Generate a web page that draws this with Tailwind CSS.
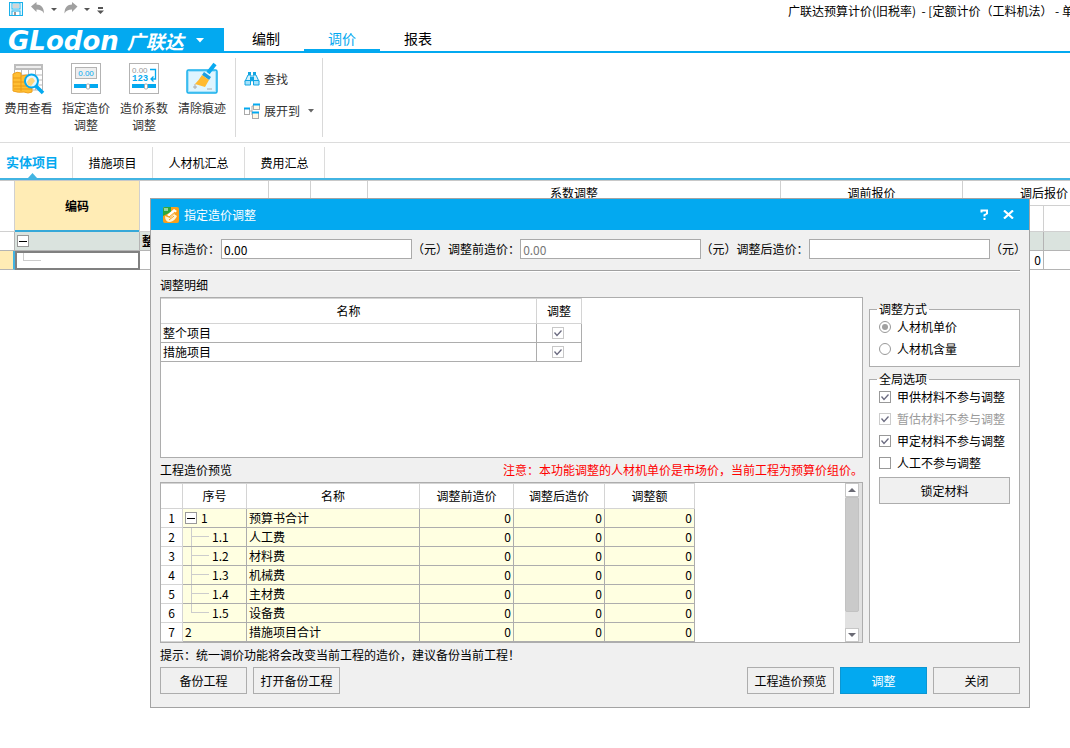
<!DOCTYPE html>
<html lang="zh-CN">
<head>
<meta charset="utf-8">
<title>广联达预算计价</title>
<script src="https://cdn.jsdelivr.net/npm/@tailwindcss/browser@4"></script>
</head>
<body class="relative min-h-screen overflow-hidden bg-white font-['Noto_Sans_CJK_SC','Liberation_Sans',sans-serif] text-xs text-black">

<!-- Quick access bar -->
<header class="flex h-7 items-start overflow-hidden">
  <div class="flex w-[788px] shrink-0 items-start pt-0.5 pl-2">
    <button aria-label="保存" class="mr-2"><svg width="15" height="15" viewBox="0 0 15 15"><rect x="1.500" y="0.500" width="13" height="13" fill="#e2f6fd" stroke="#1ab0ea"/><rect x="4" y="1" width="8" height="6" fill="#fff" stroke="#29b5ec"/><path d="M5 3h6M5 5h6" stroke="#aaa"/><rect x="4" y="9" width="8" height="4.500" fill="#fff" stroke="#1ab0ea"/><rect x="6" y="10" width="2" height="3" fill="#999"/></svg></button>
    <button aria-label="撤销" class="mr-1.5"><svg width="14" height="12" viewBox="0 0 14 12"><path d="M0 4.500 5.500 0v2.500C10 2.500 13 5.500 13 11.500 11.500 8.500 9 7.500 5.500 7.500V10z" fill="#a0a0a0"/></svg></button>
    <button aria-label="撤销列表" class="mt-1.5 mr-[7px]"><svg width="6" height="3"><path d="M0 0h6L3 3z" fill="#555"/></svg></button>
    <button aria-label="恢复" class="mr-1.5"><svg width="14" height="12" viewBox="0 0 14 12"><path d="M13.500 4.500 8 0v2.500C3.500 2.500 .5 5.500 .5 11.500 2 8.500 4.500 7.500 8 7.500V10z" fill="#a0a0a0"/></svg></button>
    <button aria-label="恢复列表" class="mt-1.5 mr-[7px]"><svg width="6" height="3"><path d="M0 0h6L3 3z" fill="#555"/></svg></button>
    <button aria-label="更多" class="mt-1"><svg width="7" height="8"><path d="M1 2h5" stroke="#555" stroke-width="2"/><path d="M0 4.500h7L3.500 8z" fill="#555"/></svg></button>
  </div>
  <h1 class="pt-[3px] leading-4 whitespace-pre">广联达预算计价(旧税率)  - [定额计价（工料机法） - 单</h1>
</header>

<!-- Main menu -->
<nav class="flex h-[25px] items-end border-b-2 border-[#03a9f0] text-sm">
  <button class="flex h-[25px] w-56 items-center bg-[#03a9f0] pl-2 text-white -mb-0.5">
    <span class="font-['DejaVu_Sans'] text-[26px] leading-6 font-bold italic">GLodon</span>
    <span class="ml-2 text-[19px] leading-6 font-bold italic">广联达</span>
    <svg class="ml-3" width="8" height="5"><path d="M0 0h8L4 4.500z" fill="#fff"/></svg>
  </button>
  <a href="#" class="ml-1 h-[23px] w-[76px] text-center leading-5">编制</a>
  <a href="#" class="h-[23px] w-[76px] border-b-2 border-[#03a9f0] text-center leading-5 text-[#03a9f0]">调价</a>
  <a href="#" class="h-[23px] w-[76px] text-center leading-5">报表</a>
</nav>

<!-- Ribbon -->
<section class="flex h-[90px] border-b border-[#dcdcdc] text-[#333]">
  <div class="flex pt-2">
    <button class="flex w-[57px] flex-col items-center justify-start leading-[17px]">
      <svg class="mb-1" width="34" height="34" viewBox="2 0 34 34"><rect x="4.500" y="4" width="28" height="25" fill="#fff" stroke="#b3b3b3"/><rect x="4" y="3" width="29" height="6" fill="#bdbdbd"/><rect x="6" y="5" width="25" height="2" fill="#eee"/><path d="M5 14h27M5 19h27M5 24h27M11.500 9v20M18.500 9v20M25.500 9v20" stroke="#b9b9b9"/><path d="M3 13q4-3 8-1v3q5-2 11 0v16q-4 2-8 0-6 1-11-1z" fill="#ffbe32" stroke="#efa11d"/><path d="M3 17h8M3 21h19M3 25h19M4 28h18M11 15v15" stroke="#e99a17"/><path d="m26 25 7 7" stroke="#03a9f0" stroke-width="3.500"/><circle cx="21.500" cy="20" r="6.500" fill="#e5f7ff" stroke="#03a9f0" stroke-width="2"/><path d="M17 21q3-5 6-4l2 3-4 5-3-1z" fill="#ffd57b"/></svg>
      费用查看</button>
    <button class="flex w-[58px] flex-col items-center justify-start leading-[17px]">
      <svg class="mb-1" width="34" height="34" viewBox="0 0 34 34"><rect x="2.500" y="2.500" width="29" height="30" fill="#fff" stroke="#b3b3b3"/><rect x="6.500" y="6.500" width="21" height="11" fill="#eee" stroke="#b3b3b3"/><text x="17" y="15" text-anchor="middle" font-family="Liberation Sans" font-size="8" fill="#03a9f0">0.00</text><path d="M5 25h24" stroke="#03a9f0" stroke-width="4"/><rect x="17.500" y="23" width="3" height="5" rx="1" fill="#fff" stroke="#aaa"/></svg>
      指定造价<br>调整</button>
    <button class="flex w-[58px] flex-col items-center justify-start leading-[17px]">
      <svg class="mb-1" width="34" height="34" viewBox="0 0 34 34"><rect x="2.500" y="2.500" width="29" height="30" fill="#fff" stroke="#b3b3b3"/><text x="5" y="12" font-family="Liberation Sans" font-size="8" fill="#999">0.00</text><text x="5" y="20" font-family="Liberation Mono" font-size="9" font-weight="bold" fill="#03a9f0">123</text><path d="M23 8.500h5.500V18H24M26.500 15.500 24 18l2.500 2.500" fill="none" stroke="#03a9f0" stroke-width="1.300"/><path d="M5 25h24" stroke="#03a9f0" stroke-width="4"/><rect x="17.500" y="23" width="3" height="5" rx="1" fill="#fff" stroke="#aaa"/></svg>
      造价系数<br>调整</button>
    <button class="flex w-[58px] flex-col items-center justify-start leading-[17px]">
      <svg class="mb-1" width="34" height="34" viewBox="0 0 34 34"><rect x="2" y="9" width="30" height="23" rx="1.500" fill="#a5e2fb" stroke="#19b0ec" stroke-width="1.500"/><rect x="4" y="11" width="26" height="19" fill="#dff5ff"/><path d="M8 26h4M10 23v5M22 28h5" stroke="#aaa"/><path d="m30 3-7 9" stroke="#0aaaf0" stroke-width="4"/><path d="m19 11 7 5-2 3-7-5z" fill="#1c9fe0"/><path d="m17 14 7 5-4 7-10-3q4-4 7-9z" fill="#ffba30"/></svg>
      清除痕迹</button>
  </div>
  <div class="mt-[5px] ml-1 flex h-[79px] w-[88px] flex-col gap-2.5 border-x border-[#d9d9d9] pt-2.5 pl-2">
    <button class="flex h-[22px] items-center gap-1"><svg width="16" height="16" viewBox="0 0 16 16"><path d="M4 4h3v6.500H1zM9 4h3l3 6.500H9z" fill="#d3f1fd" stroke="#12a5e2"/><path d="M1 9.500h5.500v4.500H1zM9.500 9.500H15v4.500H9.500z" fill="#a5e2fb" stroke="#12a5e2"/><path d="M4 1h3v3H4zM9 1h3v3H9zM6 6h4v4H6z" fill="#12a5e2"/></svg>查找</button>
    <button class="flex h-[22px] items-center gap-1"><svg width="16" height="16" viewBox="0 0 16 16"><path d="M5 8h3M8 3v9M8 3h2M8 12h2" stroke="#aaa"/><rect x=".5" y="5.500" width="5" height="6" fill="#fff" stroke="#aaa"/><path d="M0 5.500h6" stroke="#03a9f0" stroke-width="2"/><rect x="9.500" y="1.500" width="6" height="5" fill="#fff8e5" stroke="#aaa"/><path d="M9 1.500h7" stroke="#03a9f0" stroke-width="2"/><rect x="8.500" y="9.500" width="6" height="6" fill="#fff8e5" stroke="#aaa"/><path d="M8 9.500h7" stroke="#03a9f0" stroke-width="2"/></svg>展开到<svg class="ml-1" width="6" height="4"><path d="M0 0h6L3 3.500z" fill="#666"/></svg></button>
  </div>
</section>

<!-- Section tabs -->
<nav class="flex h-[37px] border-b-2 border-[#42b4e2] pt-1 leading-8">
  <a href="#" class="relative w-[73px] border-r border-[#dcdcdc] pl-1.5 text-[13px] leading-[30px] font-bold text-[#03a9f0]">实体项目<svg class="absolute bottom-0 left-7" width="9" height="5"><path d="M0 5 4.500 0 9 5z" fill="#42b4e2"/></svg></a>
  <a href="#" class="w-20 border-r border-[#dcdcdc] text-center">措施项目</a>
  <a href="#" class="w-[92px] border-r border-[#dcdcdc] text-center">人材机汇总</a>
  <a href="#" class="w-20 border-r border-[#dcdcdc] text-center">费用汇总</a>
</nav>

<!-- Item grid -->
<main class="overflow-hidden border-t border-[#c8c8c8]">
  <table class="w-[1126px] table-fixed border-separate border-spacing-0 leading-4 [&_th]:border-r [&_th]:border-b [&_th]:border-[#d0d0d0] [&_th]:p-0 [&_th]:font-normal [&_td]:border-r [&_td]:border-b [&_td]:border-[#b4b4b4] [&_td]:p-0">
    <colgroup><col class="w-[15px]"><col class="w-[125px]"><col class="w-[129px]"><col class="w-[42px]"><col class="w-[57px]"><col class="w-[413px]"><col class="w-[182px]"><col class="w-[81px]"><col class="w-[82px]"></colgroup>
    <thead>
      <tr class="h-[25px]"><th rowspan="2"></th><th rowspan="2" class="border-b-0! bg-[#ffecb5] font-bold!"><div class="flex h-[51px] items-center justify-center border-b-2 border-[#36a8d8]">编码</div></th><th rowspan="2"></th><th rowspan="2"></th><th rowspan="2"></th><th>系数调整</th><th>调前报价</th><th colspan="2">调后报价</th></tr>
      <tr class="h-[26px]"><th></th><th></th><th></th><th></th></tr>
    </thead>
    <tbody>
      <tr class="h-[19px] bg-[#dae3de]"><td class="bg-white"></td><td><button aria-label="折叠" class="ml-0.5 flex size-3 items-center justify-center border border-[#999] bg-white"><span class="h-px w-2 bg-black"></span></button></td><td class="pl-0.5! font-bold">整</td><td></td><td></td><td></td><td></td><td></td><td></td></tr>
      <tr class="h-[19px]"><td class="border-r-2! border-r-[#42b4e2]! bg-[#ffecb5]"></td><td class="border-0!"><div class="h-[19px] border-2 border-[#808080] pl-1.5"><div class="h-2 w-[18px] border-b border-l border-[#ccc]"></div></div></td><td></td><td></td><td></td><td></td><td></td><td class="pr-0.5! text-right">0</td><td></td></tr>
    </tbody>
  </table>
</main>

<!-- Dialog window -->
<div role="dialog" aria-labelledby="dlg" class="absolute top-[198px] right-10 left-[150px] border border-[#a3a3a3] bg-[#f0f0f0]">
  <div class="flex h-[31px] items-center bg-[#03a9f0] pl-3 text-white">
    <svg width="16" height="16" viewBox="0 0 16 16"><rect width="16" height="16" rx="2" fill="#f8a01c"/><path d="M0 2a2 2 0 0 1 2-2h6v5L0 9z" fill="#2fa83b"/><path d="M2 1v3M4 1v3" stroke="#fff"/><path d="M4 8 11 2l3 2-7 6z" fill="#fff"/><path d="M2 9q0 6 5 6 5-1 7-6l-3-2-4 4z" fill="#fff3d4"/><path d="m6 10 6-5M6 13l5-4" stroke="#f8a01c"/></svg>
    <h2 id="dlg" class="ml-[5px] flex-1">指定造价调整</h2>
    <button aria-label="帮助" class="mr-3.5"><svg width="9" height="11" viewBox="0 0 9 11"><path d="M1.500 3.500V1.500h5.500v3L4.500 6v1.500" fill="none" stroke="#fff" stroke-width="2"/><rect x="3.500" y="9" width="2" height="2" fill="#fff"/></svg></button>
    <button aria-label="关闭窗口" class="mr-[15px]"><svg width="11" height="9" viewBox="0 0 11 9"><path d="m1 .5 9 8M10 .5l-9 8" stroke="#fff" stroke-width="2.200"/></svg></button>
  </div>

  <div class="px-[9px] pt-[9px] pb-[13px]">
    <div class="-mr-1.5 flex h-5 items-center whitespace-nowrap">
      <label for="target">目标造价：</label><input id="target" value="0.00" class="ml-px h-5 min-w-0 flex-[191] border border-[#aaa] bg-white px-0.5">
      <span>（元）</span><label for="before">调整前造价：</label><input id="before" value="0.00" disabled class="h-5 min-w-0 flex-[180] border border-[#aaa] bg-white px-0.5 text-[#777]">
      <span>（元）</span><label for="after">调整后造价：</label><input id="after" class="h-5 min-w-0 flex-[181] border border-[#aaa] bg-white px-0.5">
      <span>（元）</span>
    </div>
    <hr class="mt-[11px] h-0.5 border-t border-b border-t-[#a0a0a0] border-b-white">

    <div class="flex gap-1.5">
      <div class="min-w-0 flex-1">
        <h3 class="h-[25px] leading-[25px]">调整明细</h3>
        <div class="h-[161px] border border-[#adadad] bg-white">
          <table class="w-[421px] table-fixed border-separate border-spacing-0 leading-4 [&_th]:border-t [&_th]:border-r [&_th]:border-b [&_th]:border-[#d4d4d4] [&_th]:p-0 [&_th]:font-normal [&_td]:border-r [&_td]:border-b [&_td]:border-[#adadad] [&_td]:p-0">
            <colgroup><col class="w-[376px]"><col class="w-[45px]"></colgroup>
            <thead><tr class="h-[26px]"><th>名称</th><th>调整</th></tr></thead>
            <tbody>
              <tr class="h-[19px]"><td class="pl-0.5!"><label for="d1">整个项目</label></td><td><span class="ml-[15px] grid size-3"><input id="d1" type="checkbox" checked disabled class="peer col-start-1 row-start-1 size-3 appearance-none border border-[#c8c8c8]"><svg class="pointer-events-none invisible col-start-1 row-start-1 peer-checked:visible" width="12" height="12"><path d="m2.500 5.500 2.500 3 4.500-5" fill="none" stroke="#6b6b80" stroke-width="1.300"/></svg></span></td></tr>
              <tr class="h-[19px]"><td class="pl-0.5!"><label for="d2">措施项目</label></td><td><span class="ml-[15px] grid size-3"><input id="d2" type="checkbox" checked disabled class="peer col-start-1 row-start-1 size-3 appearance-none border border-[#c8c8c8]"><svg class="pointer-events-none invisible col-start-1 row-start-1 peer-checked:visible" width="12" height="12"><path d="m2.500 5.500 2.500 3 4.500-5" fill="none" stroke="#6b6b80" stroke-width="1.300"/></svg></span></td></tr>
            </tbody>
          </table>
        </div>

        <div class="flex h-6 items-center justify-between"><h3>工程造价预览</h3><p class="text-[#f00]">注意：本功能调整的人材机单价是市场价，当前工程为预算价组价。</p></div>

        <div class="flex h-[161px] justify-between border border-[#adadad] bg-white">
          <table class="w-[534px] table-fixed border-separate border-spacing-0 leading-4 [&_th]:border-r [&_th]:border-b [&_th]:border-[#d4d4d4] [&_th]:p-0 [&_th]:font-normal [&_thead_th]:border-t [&_td]:border-r [&_td]:border-b [&_td]:border-[#adadad] [&_td]:bg-[#ffffe1] [&_td]:p-0 [&_tbody_tr]:h-[19px] [&_td:nth-child(3)]:pl-0.5 [&_td:nth-child(n+4)]:pr-0.5 [&_td:nth-child(n+4)]:text-right">
            <colgroup><col class="w-[22px]"><col class="w-[64px]"><col class="w-[173px]"><col class="w-[94px]"><col class="w-[91px]"><col class="w-[90px]"></colgroup>
            <thead><tr class="h-[26px]"><th></th><th>序号</th><th>名称</th><th>调整前造价</th><th>调整后造价</th><th>调整额</th></tr></thead>
            <tbody>
              <tr><th>1</th><td><div class="flex h-[18px] items-center pl-0.5"><button aria-label="折叠" class="mr-1 flex size-3 items-center justify-center border border-[#999] bg-white"><span class="h-px w-2 bg-black"></span></button>1</div></td><td>预算书合计</td><td>0</td><td>0</td><td>0</td></tr>
              <tr><th>2</th><td><div class="flex h-[18px] items-center pl-2"><span class="mr-[3px] h-[18px] w-[18px] border-l border-[#ccc]"><span class="block h-[9px] border-b border-[#ccc]"></span></span>1.1</div></td><td>人工费</td><td>0</td><td>0</td><td>0</td></tr>
              <tr><th>3</th><td><div class="flex h-[18px] items-center pl-2"><span class="mr-[3px] h-[18px] w-[18px] border-l border-[#ccc]"><span class="block h-[9px] border-b border-[#ccc]"></span></span>1.2</div></td><td>材料费</td><td>0</td><td>0</td><td>0</td></tr>
              <tr><th>4</th><td><div class="flex h-[18px] items-center pl-2"><span class="mr-[3px] h-[18px] w-[18px] border-l border-[#ccc]"><span class="block h-[9px] border-b border-[#ccc]"></span></span>1.3</div></td><td>机械费</td><td>0</td><td>0</td><td>0</td></tr>
              <tr><th>5</th><td><div class="flex h-[18px] items-center pl-2"><span class="mr-[3px] h-[18px] w-[18px] border-l border-[#ccc]"><span class="block h-[9px] border-b border-[#ccc]"></span></span>1.4</div></td><td>主材费</td><td>0</td><td>0</td><td>0</td></tr>
              <tr><th>6</th><td><div class="flex h-[18px] items-center pl-2"><span class="mr-[3px] h-[18px] w-[18px]"><span class="block h-[9px] border-b border-l border-[#ccc]"></span></span>1.5</div></td><td>设备费</td><td>0</td><td>0</td><td>0</td></tr>
              <tr><th>7</th><td class="pl-0.5!">2</td><td>措施项目合计</td><td>0</td><td>0</td><td>0</td></tr>
            </tbody>
          </table>
          <div class="flex w-[17px] flex-col items-start bg-[#e1e1e1]">
            <button aria-label="向上滚动" class="flex h-3.5 w-3.5 items-center justify-center border border-[#c6c6c6] bg-white"><svg width="8" height="4"><path d="M0 4 4 0l4 4z" fill="#6b6b75"/></svg></button>
            <div class="h-[115px] w-3.5 rounded-xs border border-[#c2c2c2] bg-[#cacaca]"></div>
            <div class="flex-1"></div>
            <button aria-label="向下滚动" class="flex h-3.5 w-3.5 items-center justify-center border border-[#c6c6c6] bg-white"><svg width="8" height="4"><path d="M0 0h8L4 4z" fill="#6b6b75"/></svg></button>
          </div>
        </div>
      </div>

      <div class="flex w-[151px] flex-col gap-[5px] pt-[30px]">
        <fieldset class="border border-[#adadad] bg-white pb-1.5 pl-[9px]">
          <legend class="-ml-0.5 h-3.5 px-0.5 leading-3.5">调整方式</legend>
          <label class="flex h-[22px] items-center gap-1.5"><input type="radio" name="mode" checked class="size-3 appearance-none rounded-full border border-[#999] bg-white bg-clip-content p-0.5 checked:bg-[#a0a0a0]">人材机单价</label>
          <label class="flex h-[22px] items-center gap-1.5"><input type="radio" name="mode" class="size-3 appearance-none rounded-full border border-[#999] bg-white bg-clip-content p-0.5 checked:bg-[#a0a0a0]">人材机含量</label>
        </fieldset>
        <fieldset class="flex-1 border border-[#adadad] bg-white px-[9px]">
          <legend class="-ml-0.5 h-3.5 px-0.5 leading-3.5">全局选项</legend>
          <label class="flex h-[22px] items-center gap-1.5"><span class="grid size-3"><input type="checkbox" checked class="peer col-start-1 row-start-1 size-3 appearance-none border border-[#999]"><svg class="pointer-events-none invisible col-start-1 row-start-1 peer-checked:visible" width="12" height="12"><path d="m2.500 5.500 2.500 3 4.500-5" fill="none" stroke="#6b6b80" stroke-width="1.300"/></svg></span>甲供材料不参与调整</label>
          <label class="flex h-[22px] items-center gap-1.5 text-[#9a9a9a]"><span class="grid size-3"><input type="checkbox" checked disabled class="peer col-start-1 row-start-1 size-3 appearance-none border border-[#ccc]"><svg class="pointer-events-none invisible col-start-1 row-start-1 peer-checked:visible" width="12" height="12"><path d="m2.500 5.500 2.500 3 4.500-5" fill="none" stroke="#6b6b80" stroke-width="1.300"/></svg></span>暂估材料不参与调整</label>
          <label class="flex h-[22px] items-center gap-1.5"><span class="grid size-3"><input type="checkbox" checked class="peer col-start-1 row-start-1 size-3 appearance-none border border-[#999]"><svg class="pointer-events-none invisible col-start-1 row-start-1 peer-checked:visible" width="12" height="12"><path d="m2.500 5.500 2.500 3 4.500-5" fill="none" stroke="#6b6b80" stroke-width="1.300"/></svg></span>甲定材料不参与调整</label>
          <label class="flex h-[22px] items-center gap-1.5"><span class="grid size-3"><input type="checkbox" class="peer col-start-1 row-start-1 size-3 appearance-none border border-[#999]"><svg class="pointer-events-none invisible col-start-1 row-start-1 peer-checked:visible" width="12" height="12"><path d="m2.500 5.500 2.500 3 4.500-5" fill="none" stroke="#6b6b80" stroke-width="1.300"/></svg></span>人工不参与调整</label>
          <button class="mt-[3px] h-[27px] w-full border border-[#adadad] bg-[#f0f0f0]">锁定材料</button>
        </fieldset>
      </div>
    </div>

    <p class="h-6 leading-6">提示：统一调价功能将会改变当前工程的造价，建议备份当前工程！</p>
    <div class="flex gap-1.5">
      <button class="h-[27px] w-[87px] border border-[#adadad]">备份工程</button>
      <button class="h-[27px] w-[87px] border border-[#adadad]">打开备份工程</button>
      <button class="ml-auto h-[27px] w-[87px] border border-[#adadad]">工程造价预览</button>
      <button class="h-[27px] w-[87px] border border-[#0c96d2] bg-[#03a9f0] text-white">调整</button>
      <button class="h-[27px] w-[87px] border border-[#adadad]">关闭</button>
    </div>
  </div>
</div>
</body>
</html>
